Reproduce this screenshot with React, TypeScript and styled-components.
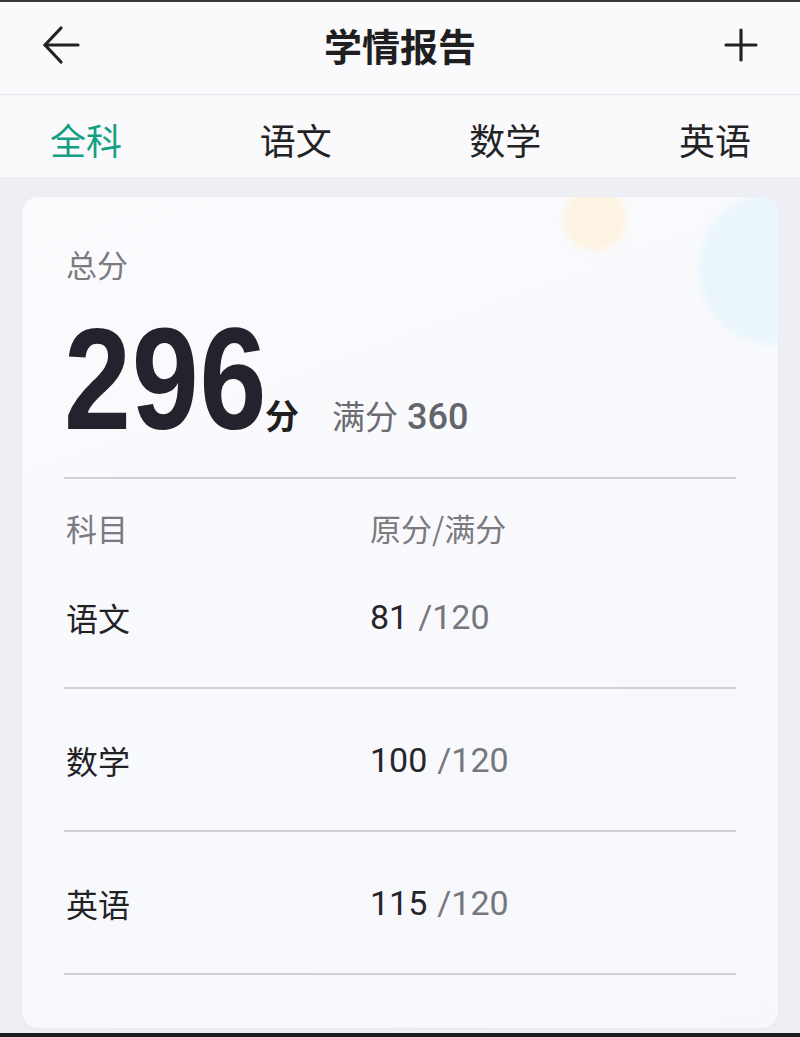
import React from "react";
import styled, { createGlobalStyle } from "styled-components";

const Global = createGlobalStyle`
  html, body { margin: 0; padding: 0; }
  body {
    background: #eeeef3;
    font-family: "Noto Sans CJK SC", "Noto Sans", Roboto, sans-serif;
    -webkit-font-smoothing: antialiased;
  }
`;

const Page = styled.div`
  width: 800px;
  height: 1037px;
  display: flex;
  flex-direction: column;
  background: #eeeff4;
  overflow: hidden;
`;

const Edge = styled.div<{ $h: number; $c: string }>`
  height: ${(p) => p.$h}px;
  flex: none;
  background: ${(p) => p.$c};
`;

const Header = styled.header`
  height: 93px;
  flex: none;
  display: grid;
  grid-template-columns: 1fr auto 1fr;
  align-items: center;
  padding: 0 42px 7px;
  box-sizing: border-box;
  background: #fafafc;
  border-bottom: 1px solid #e7e7eb;
`;

const IconButton = styled.div<{ $end?: boolean }>`
  display: flex;
  justify-content: ${(p) => (p.$end ? "flex-end" : "flex-start")};
  align-items: center;
  color: #222;
`;

const Title = styled.h1`
  margin: 0;
  font-size: 38px;
  font-weight: 700;
  line-height: 1;
  color: #1f1f22;
`;

const Tabs = styled.nav`
  height: 82px;
  flex: none;
  display: flex;
  justify-content: space-between;
  align-items: center;
  padding: 5px 49px 0 50px;
  box-sizing: border-box;
  background: #fafafc;
`;

const Tab = styled.span<{ $active?: boolean }>`
  font-size: 36px;
  line-height: 1;
  color: ${(p) => (p.$active ? "#15a083" : "#232326")};
`;

const Body = styled.main`
  flex: 1;
  display: flex;
  flex-direction: column;
  padding: 20px 22px 5px;
`;

const Card = styled.section`
  position: relative;
  flex: 1;
  border-radius: 16px;
  background: linear-gradient(160deg, #fbfbfe 0%, #f8f9fc 60%, #f7f8fb 100%);
  box-shadow: 0 1px 3px rgba(0, 0, 0, 0.03);
  overflow: hidden;
  padding: 0 42px;
`;

const Blob = styled.div<{ $x: number; $y: number; $rx: number; $ry: number; $c: string }>`
  position: absolute;
  left: ${(p) => p.$x - p.$rx}px;
  top: ${(p) => p.$y - p.$ry}px;
  width: ${(p) => p.$rx * 2}px;
  height: ${(p) => p.$ry * 2}px;
  border-radius: 50%;
  background: ${(p) => p.$c};
  filter: blur(3px);
`;

const Content = styled.div`
  position: relative;
`;

const Summary = styled.div`
  padding-top: 47px;
  padding-bottom: 26px;
  border-bottom: 2px solid #cfd0d4;
`;

const Label = styled.div`
  font-size: 31px;
  line-height: 40px;
  color: #7b7b7f;
  padding-left: 2px;
`;

const ScoreLine = styled.div`
  display: flex;
  align-items: baseline;
  margin-top: 23px;
  height: 144px;
`;

const BigNumber = styled.span`
  display: inline-block;
  width: 200px;
  font-family: "Liberation Sans", Arial, sans-serif;
  font-weight: 700;
  font-size: 145px;
  line-height: 144px;
  color: #24222c;
  transform: scaleX(0.83);
  transform-origin: left center;
  letter-spacing: 1px;
`;

const Unit = styled.span`
  font-size: 34px;
  font-weight: 700;
  color: #1f1f22;
  margin-left: 1px;
`;

const FullScore = styled.span`
  margin-left: 33px;
  font-size: 33px;
  color: #6a6c72;
`;

const FullNum = styled.span`
  font-family: Roboto, "Noto Sans", sans-serif;
  font-weight: 500;
  font-size: 36px;
  color: #62656c;
  margin-left: 9px;
`;

const TableHead = styled.div`
  display: grid;
  grid-template-columns: 304px 1fr;
  padding-top: 31px;
  font-size: 31px;
  line-height: 36px;
  color: #7b7b7f;
  padding-left: 2px;
`;

const Row = styled.div`
  display: grid;
  grid-template-columns: 304px 1fr;
  align-items: center;
  height: 141px;
  border-bottom: 2px solid #cfd0d4;
  padding-left: 2px;
`;

const Subject = styled.span`
  font-size: 32px;
  color: #222226;
`;

const Score = styled.span`
  font-family: Roboto, "Noto Sans", sans-serif;
  font-size: 34px;
  color: #26262a;
`;

const Max = styled.span`
  color: #75777c;
  margin-left: 10px;
`;

const BackIcon = () => (
  <svg width="38" height="40" viewBox="0 0 38 40" fill="none" stroke="#222" strokeWidth="3.2" strokeLinecap="round" strokeLinejoin="round">
    <path d="M36 20H3" />
    <path d="M19 3L3 20l16 17" />
  </svg>
);

const PlusIcon = () => (
  <svg width="34" height="34" viewBox="0 0 34 34" fill="none" stroke="#222" strokeWidth="3.2" strokeLinecap="round">
    <path d="M17 2v30" />
    <path d="M2 17h30" />
  </svg>
);

const tabs = ["全科", "语文", "数学", "英语"];
const rows = [
  { name: "语文", score: 81, max: 120 },
  { name: "数学", score: 100, max: 120 },
  { name: "英语", score: 115, max: 120 },
];

export default function App() {
  return (
    <>
      <Global />
      <Page>
        <Edge $h={2} $c="#3a3a3c" />
        <Header>
          <IconButton>
            <BackIcon />
          </IconButton>
          <Title>学情报告</Title>
          <IconButton $end>
            <PlusIcon />
          </IconButton>
        </Header>
        <Tabs>
          {tabs.map((t, i) => (
            <Tab key={t} $active={i === 0}>
              {t}
            </Tab>
          ))}
        </Tabs>
        <Body>
          <Card>
            <Blob $x={573} $y={22} $rx={32} $ry={32} $c="#fdf3e2" />
            <Blob $x={748} $y={72} $rx={72} $ry={76} $c="#ebf6fc" />
            <Content>
              <Summary>
                <Label>总分</Label>
                <ScoreLine>
                  <BigNumber>296</BigNumber>
                  <Unit>分</Unit>
                  <FullScore>
                    满分<FullNum>360</FullNum>
                  </FullScore>
                </ScoreLine>
              </Summary>
              <TableHead>
                <span>科目</span>
                <span>原分/满分</span>
              </TableHead>
              {rows.map((r) => (
                <Row key={r.name}>
                  <Subject>{r.name}</Subject>
                  <Score>
                    {r.score}
                    <Max>/{r.max}</Max>
                  </Score>
                </Row>
              ))}
            </Content>
          </Card>
        </Body>
        <Edge $h={4} $c="#1c1c1e" />
      </Page>
    </>
  );
}
